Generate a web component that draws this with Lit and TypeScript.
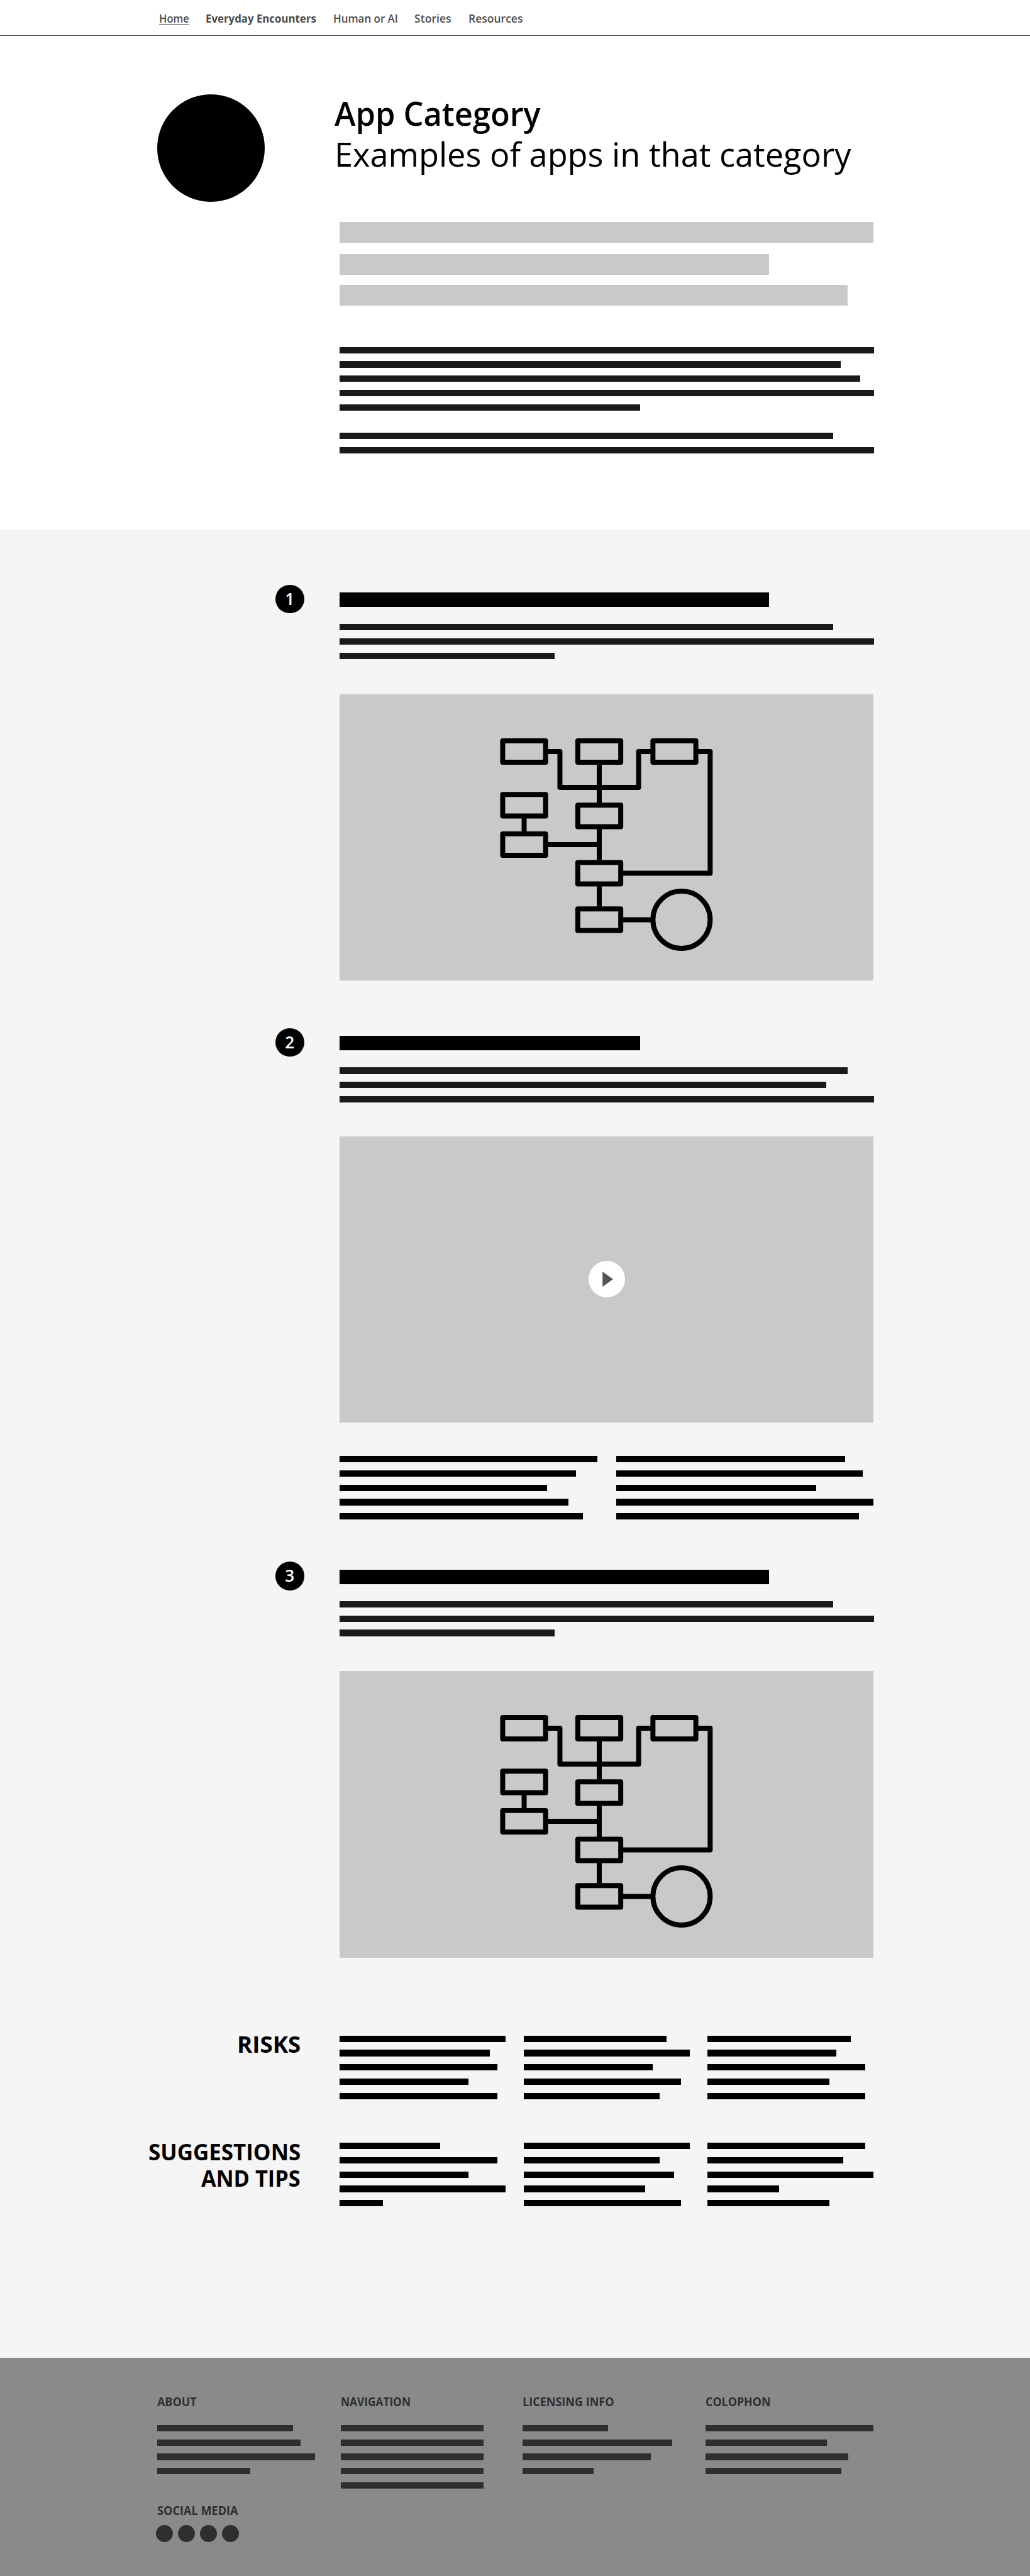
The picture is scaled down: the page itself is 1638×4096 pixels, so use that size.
import { LitElement, html, css, svg, unsafeCSS } from "lit";
import { customElement, property } from "lit/decorators.js";
import { styleMap } from "lit/directives/style-map.js";
import { classMap } from "lit/directives/class-map.js";

// CSS pixels per design unit.
const SCALE = 4096 / 7200;
const px = (n: number) => `${+(n * SCALE).toFixed(4)}px`;
const u = (n: number) => unsafeCSS(px(n));

/** Text condensed so that it spans an exact width in design units. */
@customElement("fit-text")
export class FitText extends LitElement {
  @property({ type: Number }) width = 0;
  @property() text = "";

  static styles = css`
    :host {
      display: block;
      white-space: nowrap;
    }
    .box {
      display: block;
    }
    .text {
      display: inline-block;
      transform-origin: 0 50%;
    }
    :host([underlined]) .text {
      text-decoration: underline;
      text-decoration-thickness: 1px;
      text-decoration-skip-ink: none;
      text-underline-offset: 2px;
    }
  `;

  firstUpdated() {
    const el = this.renderRoot.querySelector<HTMLElement>(".text")!;
    const natural = el.getBoundingClientRect().width;
    el.style.transform = `scaleX(${(this.width * SCALE) / natural})`;
  }

  render() {
    return html`<span class="box" style=${styleMap({ width: px(this.width) })}
      ><span class="text">${this.text}</span></span
    >`;
  }
}

/** A stack of placeholder bars standing in for lines of copy. */
@customElement("text-bars")
export class TextBars extends LitElement {
  @property({ attribute: false }) widths: number[] = [];

  static styles = css`
    :host {
      display: flex;
      flex-direction: column;
      gap: ${u(22)};
      color: #000;
    }
    :host([soft]) {
      color: #1a1a1a;
    }
    :host([footer]) {
      color: #2f2f2f;
    }
    .bar {
      height: ${u(18)};
      background: currentColor;
    }
  `;

  render() {
    return this.widths.map(
      (w) => html`<div class="bar" style=${styleMap({ width: px(w) })}></div>`
    );
  }
}

@customElement("flow-diagram")
export class FlowDiagram extends LitElement {
  static styles = css`
    :host,
    .art {
      display: block;
      width: 100%;
      height: 100%;
    }
  `;

  render() {
    const nodes = [
      [456, 130], [666, 130], [876, 130],
      [456, 280], [456, 390],
      [666, 310], [666, 470], [666, 600],
    ];
    return html`<svg class="art" viewBox="0 0 1492 800" fill="none" stroke="#000" stroke-width="14" stroke-linejoin="round">
      ${nodes.map(([x, y]) => svg`<rect x=${x} y=${y} width="120" height="60" />`)}
      <circle cx="956" cy="630" r="80" />
      <path d="M576 160H616V260H836V160H876M996 160H1036V500H786M726 190V310M726 370V470M726 530V600M516 340V390M576 420H726M786 630H876" />
    </svg>`;
  }
}

interface Step {
  title: number;
  lines: number[];
  media: "diagram" | "video";
  columns?: number[][];
}

const NAV = [
  { text: "Home", width: 84, current: true },
  { text: "Everyday Encounters", width: 309, strong: true },
  { text: "Human or AI", width: 181 },
  { text: "Stories", width: 103 },
  { text: "Resources", width: 152 },
];

const STEPS: Step[] = [
  { title: 1200, lines: [1380, 1494, 600], media: "diagram" },
  {
    title: 840,
    lines: [1420, 1360, 1494],
    media: "video",
    columns: [
      [720, 660, 580, 640, 680],
      [640, 690, 560, 720, 680],
    ],
  },
  { title: 1200, lines: [1380, 1494, 600], media: "diagram" },
];

const NOTES = [
  {
    label: [{ text: "RISKS", width: 178 }],
    columns: [
      [464, 420, 440, 360, 440],
      [400, 464, 360, 440, 380],
      [400, 360, 440, 340, 440],
    ],
  },
  {
    label: [
      { text: "SUGGESTIONS", width: 426 },
      { text: "AND TIPS", width: 277 },
    ],
    columns: [
      [280, 440, 360, 464, 120],
      [464, 380, 420, 340, 440],
      [440, 380, 464, 200, 340],
    ],
  },
];

const FOOTER = [
  { text: "ABOUT", width: 110, lines: [380, 400, 440, 260] },
  { text: "NAVIGATION", width: 195, lines: [400, 400, 400, 400, 400] },
  { text: "LICENSING INFO", width: 256, lines: [240, 420, 360, 200] },
  { text: "COLOPHON", width: 182, lines: [470, 340, 400, 380] },
];

@customElement("app-root")
export class AppRoot extends LitElement {
  static styles = css`
    :host {
      display: block;
      background: #fff;
      color: #000;
      font-family: "Open Sans", "Noto Sans", sans-serif;
    }
    .nav {
      box-sizing: border-box;
      display: flex;
      gap: ${u(47)};
      height: ${u(100)};
      padding-left: ${u(444)};
      border-bottom: 1px solid #555;
      color: #4a4a4a;
      font-size: ${u(31)};
      font-weight: 600;
      line-height: ${u(102)};
    }
    .nav .strong {
      font-weight: 700;
    }
    .hero {
      box-sizing: border-box;
      height: ${u(1382)};
      padding: ${u(159)} 0 0 ${u(440)};
      display: grid;
      grid-template-columns: ${u(496)} 1fr;
      align-items: start;
    }
    .portrait {
      width: ${u(300)};
      height: ${u(300)};
      margin-top: ${u(5)};
      border-radius: 50%;
      background: #000;
    }
    .title {
      margin: 0;
      padding-top: ${u(2)};
      font-size: ${u(92.6)};
      font-weight: 600;
      line-height: ${u(114)};
    }
    .subtitle {
      font-weight: 400;
    }
    .intro {
      padding-left: ${u(14)};
    }
    .leads {
      display: flex;
      flex-direction: column;
      gap: ${u(28)};
      padding-top: ${u(131)};
      margin-bottom: ${u(116)};
    }
    .lead {
      height: ${u(58)};
      background: #c9c9c9;
    }
    .lead:first-child {
      margin-bottom: ${u(4)};
    }
    .second {
      margin-top: ${u(62)};
    }
    .body {
      box-sizing: border-box;
      height: ${u(5108)};
      padding-top: ${u(152)};
      background: #f5f5f5;
    }
    .step {
      display: grid;
      grid-template-columns: ${u(80)} ${u(1492)};
      column-gap: ${u(100)};
      padding-left: ${u(770)};
      margin-bottom: ${u(134)};
      align-items: start;
    }
    .step.wide {
      margin-bottom: ${u(118)};
    }
    .badge {
      height: ${u(80)};
      border-radius: 50%;
      background: #000;
      color: #fff;
      font-size: ${u(46)};
      font-weight: 600;
      line-height: ${u(79)};
      text-align: center;
    }
    .content {
      padding-top: ${u(22)};
    }
    .heading {
      height: ${u(40)};
      margin-bottom: ${u(48)};
      background: #000;
    }
    .media {
      display: flex;
      align-items: center;
      justify-content: center;
      height: ${u(800)};
      margin-top: ${u(98)};
      background: #c9c9c9;
    }
    .diagram {
      width: 100%;
      height: 100%;
    }
    .wide .media {
      margin-top: ${u(94)};
    }
    .play {
      display: block;
      width: ${u(102)};
      height: ${u(102)};
    }
    .pair {
      display: grid;
      grid-template-columns: ${u(772)} 1fr;
      padding-top: ${u(94)};
    }
    .notes {
      display: grid;
      grid-template-columns: ${u(840)} repeat(3, ${u(514)});
      padding-top: ${u(72)};
    }
    .notes + .notes {
      padding-top: ${u(110)};
    }
    .label {
      display: flex;
      flex-direction: column;
      align-items: flex-end;
      padding-top: ${u(1)};
      font-size: ${u(63)};
      font-weight: 700;
      line-height: ${u(74)};
    }
    .copy {
      padding: ${u(12)} 0 0 ${u(110)};
    }
    .footer {
      box-sizing: border-box;
      display: grid;
      grid-template-columns: ${u(512)} ${u(508)} ${u(512)} ${u(470)};
      height: ${u(610)};
      padding: ${u(101)} 0 0 ${u(440)};
      background: #8a8a8a;
      color: #2f2f2f;
      font-size: ${u(35.5)};
      font-weight: 700;
      line-height: ${u(44)};
    }
    .group {
      margin-bottom: ${u(43)};
    }
    .social {
      margin: ${u(79)} 0 ${u(19)};
    }
    .dots {
      display: flex;
      gap: ${u(13.3)};
      margin-left: ${u(-4)};
    }
    .dot {
      width: ${u(48)};
      height: ${u(48)};
      border-radius: 50%;
      background: #2f2f2f;
    }
  `;

  private step(step: Step, index: number) {
    return html`<section class=${classMap({ step: true, wide: !!step.columns })}>
      <div class="badge">${index + 1}</div>
      <div class="content">
        <div class="heading" style=${styleMap({ width: px(step.title) })}></div>
        <text-bars soft .widths=${step.lines}></text-bars>
        <div class="media">
          ${step.media === "diagram"
            ? html`<flow-diagram class="diagram"></flow-diagram>`
            : html`<svg class="play" viewBox="0 0 102 102">
                <circle cx="51" cy="51" r="51" fill="#fff" />
                <path d="M39 30V72L68.5 51Z" fill="#555" />
              </svg>`}
        </div>
        ${step.columns
          ? html`<div class="pair">
              ${step.columns.map((c) => html`<text-bars .widths=${c}></text-bars>`)}
            </div>`
          : null}
      </div>
    </section>`;
  }

  render() {
    return html`
      <nav class="nav">
        ${NAV.map(
          (n) => html`<fit-text
            class=${classMap({ strong: !!n.strong })}
            ?underlined=${!!n.current}
            .text=${n.text}
            .width=${n.width}
          ></fit-text>`
        )}
      </nav>
      <header class="hero">
        <div class="portrait"></div>
        <div>
          <h1 class="title">
            <fit-text .text=${"App Category"} .width=${576}></fit-text>
            <fit-text class="subtitle" .text=${"Examples of apps in that category"} .width=${1444}></fit-text>
          </h1>
          <div class="intro">
            <div class="leads">
              ${[1492, 1200, 1420].map(
                (w) => html`<div class="lead" style=${styleMap({ width: px(w) })}></div>`
              )}
            </div>
            <text-bars soft .widths=${[1494, 1400, 1454, 1494, 840]}></text-bars>
            <text-bars class="second" soft .widths=${[1380, 1494]}></text-bars>
          </div>
        </div>
      </header>
      <main class="body">
        ${STEPS.map((s, i) => this.step(s, i))}
        ${NOTES.map(
          (n) => html`<section class="notes">
            <div class="label">
              ${n.label.map((l) => html`<fit-text .text=${l.text} .width=${l.width}></fit-text>`)}
            </div>
            ${n.columns.map(
              (c) => html`<div class="copy"><text-bars .widths=${c}></text-bars></div>`
            )}
          </section>`
        )}
      </main>
      <footer class="footer">
        ${FOOTER.map(
          (f, i) => html`<div>
            <fit-text class="group" .text=${f.text} .width=${f.width}></fit-text>
            <text-bars footer .widths=${f.lines}></text-bars>
            ${i === 0
              ? html`<fit-text class="social" .text=${"SOCIAL MEDIA"} .width=${226}></fit-text>
                  <div class="dots">
                    ${[0, 1, 2, 3].map(() => html`<div class="dot"></div>`)}
                  </div>`
              : null}
          </div>`
        )}
      </footer>
    `;
  }
}
